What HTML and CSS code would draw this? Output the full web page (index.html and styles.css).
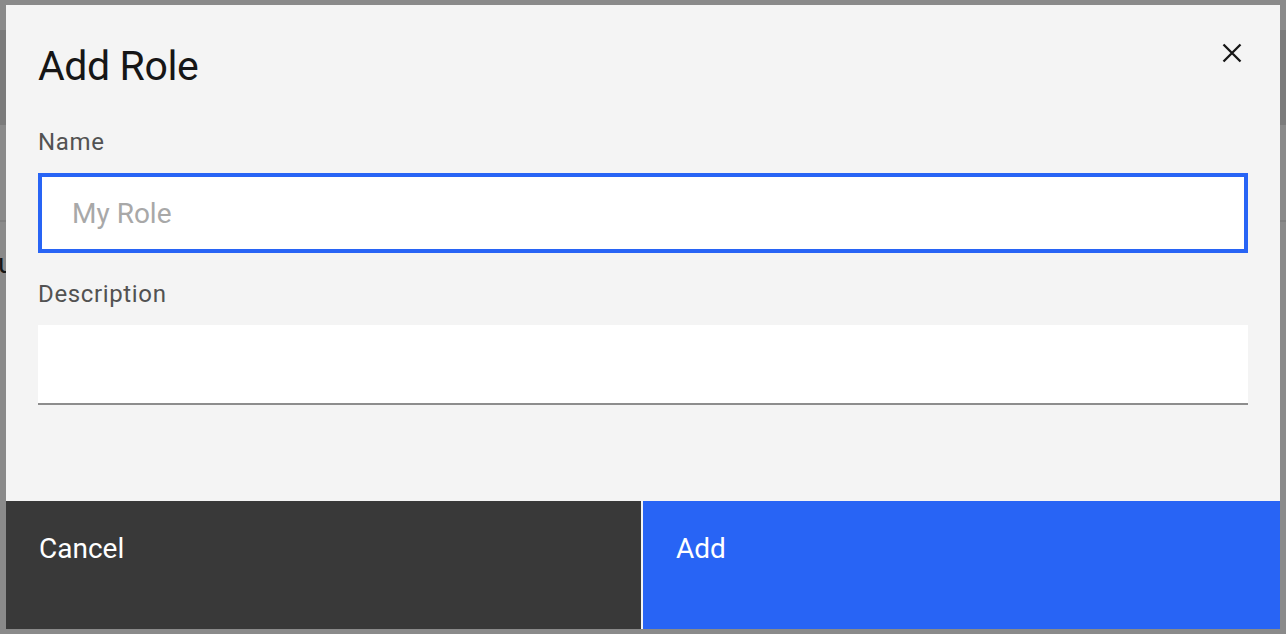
FILE: index.html
```html
<!DOCTYPE html>
<html lang="en">
<head>
<meta charset="utf-8">
<title>Add Role</title>
<link rel="stylesheet" href="styles.css">
</head>
<body>
<div class="page">
  <div class="page-top"></div>
  <div class="page-band"></div>
  <div class="page-rule"></div>
  <div class="page-text">users</div>
</div>
<div class="overlay">
  <div class="modal" role="dialog" aria-labelledby="modal-title">
    <div class="modal-header">
      <h2 class="modal-title" id="modal-title">Add Role</h2>
      <button class="modal-close" type="button" aria-label="Close">
        <svg width="20" height="20" viewBox="0 0 20 20" aria-hidden="true">
          <path d="M1.5 1.5 L18.5 18.5 M18.5 1.5 L1.5 18.5" stroke="#161616" stroke-width="2.3" fill="none"/>
        </svg>
      </button>
    </div>
    <div class="modal-body">
      <div class="field">
        <label class="field-label" for="role-name">Name</label>
        <input class="text-input is-focused" id="role-name" type="text" placeholder="My Role">
      </div>
      <div class="field field-desc">
        <label class="field-label" for="role-desc">Description</label>
        <input class="text-input" id="role-desc" type="text">
      </div>
    </div>
    <div class="modal-footer">
      <button class="btn btn-secondary" type="button">Cancel</button>
      <button class="btn btn-primary" type="button">Add</button>
    </div>
  </div>
</div>
</body>
</html>
```

FILE: styles.css
```css
* {
  box-sizing: border-box;
}

html, body {
  margin: 0;
  padding: 0;
  height: 100%;
  overflow: hidden;
}

body {
  font-family: Roboto, "Noto Sans", "Liberation Sans", sans-serif;
  background: #ffffff;
  color: #161616;
}

.page-top {
  height: 30px;
}

.page-band {
  height: 95px;
  background: #e0e0e0;
}

.page-rule {
  margin-top: 95px;
  height: 2px;
  background: #e8e8e8;
}

.page-text {
  margin-top: 24px;
  margin-left: -2px;
  font-size: 28px;
  line-height: 36px;
  color: #161616;
}

.overlay {
  position: fixed;
  inset: 0;
  background: rgba(22, 22, 22, 0.5);
  display: flex;
  align-items: center;
  justify-content: center;
}

.modal {
  width: 1274px;
  height: 624px;
  background: #f4f4f4;
  display: flex;
  flex-direction: column;
}

.modal-header {
  display: flex;
  justify-content: space-between;
  align-items: flex-start;
  padding: 37px 32px 0 32px;
}

.modal-title {
  margin: 0;
  font-size: 41px;
  line-height: 48px;
  letter-spacing: -0.4px;
  font-weight: 400;
  color: #161616;
}

.modal-close {
  margin: 1px 6px 0 0;
  padding: 0;
  width: 20px;
  height: 20px;
  border: 0;
  background: transparent;
  display: flex;
}

.modal-body {
  flex: 1;
  padding: 36px 32px 0 32px;
}

.field-desc {
  margin-top: 25px;
}

.field-label {
  display: block;
  font-size: 24px;
  line-height: 32px;
  letter-spacing: 0.64px;
  color: #525252;
  margin-bottom: 15px;
}

.text-input {
  display: block;
  width: 100%;
  height: 80px;
  margin: 0;
  padding: 0 30px 0 30px;
  border: 0;
  border-bottom: 2px solid #8d8d8d;
  background: #ffffff;
  font-family: inherit;
  font-size: 28px;
  color: #161616;
  outline: none;
}

.text-input.is-focused {
  border: 4px solid #2864f5;
  padding: 0 28px 0 30px;
}

.text-input::placeholder {
  color: #a8a8a8;
}

.modal-footer {
  height: 128px;
  display: grid;
  grid-template-columns: 635px 1fr;
  column-gap: 2px;
}

.btn {
  border: 0;
  margin: 0;
  padding: 30px 33px 0 33px;
  display: flex;
  align-items: flex-start;
  text-align: left;
  font-family: inherit;
  font-size: 28px;
  line-height: 36px;
  color: #ffffff;
}

.btn-secondary {
  background: #393939;
}

.btn-primary {
  background: #2864f5;
}
```
